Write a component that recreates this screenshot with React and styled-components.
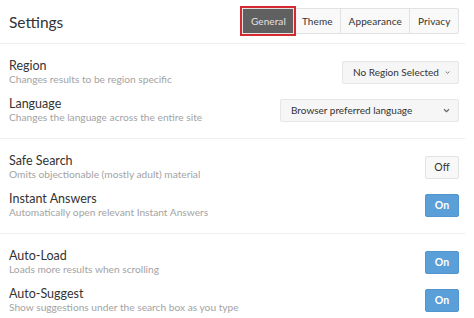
import React from 'react'
import styled, { createGlobalStyle } from 'styled-components'

const GlobalStyle = createGlobalStyle`
    body {
        margin: 0;
        background: #fff;
        font-family: Lato, "Open Sans", sans-serif;
        color: #333;
    }
`

const sections = [
    [
        { title: 'Region', desc: 'Changes results to be region specific', select: 'No Region Selected', width: 117 },
        { title: 'Language', desc: 'Changes the language across the entire site', select: 'Browser preferred language', width: 179 },
    ],
    [
        { title: 'Safe Search', desc: 'Omits objectionable (mostly adult) material', toggle: false },
        { title: 'Instant Answers', desc: 'Automatically open relevant Instant Answers', toggle: true },
    ],
    [
        { title: 'Auto-Load', desc: 'Loads more results when scrolling', toggle: true },
        { title: 'Auto-Suggest', desc: 'Show suggestions under the search box as you type', toggle: true },
    ],
]

const tabs = ['General', 'Theme', 'Appearance', 'Privacy']

const Chevron = () => (
    <svg width="7" height="5" viewBox="0 0 7 5">
        <path d="M1 1.2 L3.5 3.6 L6 1.2" fill="none" stroke="#666" strokeWidth="1.2" />
    </svg>
)

const App = () => {
    return (
        <Page>
            <GlobalStyle />
            <Header>
                <Title>Settings</Title>
                <Tabs>
                    {tabs.map((t, i) => (
                        <Tab key={t} active={i === 0}>{t}</Tab>
                    ))}
                </Tabs>
            </Header>
            {sections.map((rows, i) => (
                <Section key={i}>
                    {rows.map(row => (
                        <Row key={row.title}>
                            <Info>
                                <Label>{row.title}</Label>
                                <Desc>{row.desc}</Desc>
                            </Info>
                            {row.select ? (
                                <Select style={{ width: row.width }}>
                                    <span>{row.select}</span>
                                    <Chevron />
                                </Select>
                            ) : (
                                <Toggle on={row.toggle}>{row.toggle ? 'On' : 'Off'}</Toggle>
                            )}
                        </Row>
                    ))}
                </Section>
            ))}
        </Page>
    )
}

const Page = styled.div`
    width: 465px;
`
const Header = styled.div`
    box-sizing: border-box;
    height: 44px;
    display: flex;
    align-items: center;
    justify-content: space-between;
    padding: 0 6px 0 9px;
    border-bottom: 1px solid #eee;
`
const Title = styled.div`
    font-size: 15.5px;
    line-height: 18px;
    color: #333;
`
const Tabs = styled.div`
    display: flex;
    height: 24px;
    margin-top: -1px;
    border: 1px solid #e2e2e2;
    border-radius: 2px;
    background: #f9f9f9;
`
const Tab = styled.div`
    display: flex;
    align-items: center;
    padding: 0 7.5px;
    font-size: 10px;
    letter-spacing: 0.1px;
    color: ${p => p.active ? '#e2e2e2' : '#333'};
    background: ${p => p.active ? '#606060' : 'transparent'};
    outline: ${p => p.active ? '2px solid #d42a32' : 'none'};
    outline-offset: 1px;
    & + & {
        border-left: 1px solid #e2e2e2;
    }
`
const Section = styled.div`
    display: flex;
    flex-direction: column;
    gap: 10px;
    padding: 14px 6px 14px 9px;
    & + & {
        border-top: 1px solid #eee;
    }
`
const Row = styled.div`
    display: flex;
    align-items: center;
    justify-content: space-between;
    height: 28px;
`
const Info = styled.div`
    display: flex;
    flex-direction: column;
`
const Label = styled.div`
    font-size: 12.5px;
    line-height: 15px;
    color: #333;
`
const Desc = styled.div`
    font-size: 10.2px;
    line-height: 13px;
    color: #a3a3a3;
`
const Select = styled.div`
    box-sizing: border-box;
    height: 23px;
    display: flex;
    align-items: center;
    justify-content: space-between;
    gap: 6px;
    padding: 0 8px 0 10px;
    font-size: 10px;
    white-space: nowrap;
    color: #333;
    background: #f6f6f6;
    border: 1px solid #e6e6e6;
    border-radius: 2px;
`
const Toggle = styled.div`
    box-sizing: border-box;
    width: 34px;
    height: 23px;
    display: flex;
    align-items: center;
    justify-content: center;
    font-size: 10.5px;
    font-weight: ${p => p.on ? 700 : 400};
    color: ${p => p.on ? '#fff' : '#333'};
    background: ${p => p.on ? '#5a9fd8' : '#f8f8f8'};
    border: 1px solid ${p => p.on ? '#5196d0' : '#e3e3e3'};
    border-radius: 2px;
`

export default App
